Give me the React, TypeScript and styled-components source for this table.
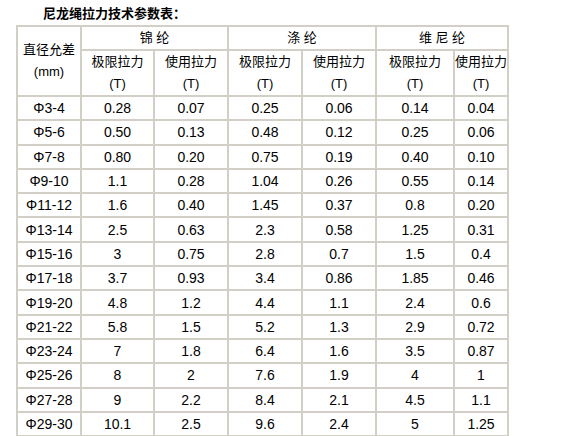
import React from 'react';
import styled, { createGlobalStyle } from 'styled-components';

const GlobalStyle = createGlobalStyle`
  html, body {
    margin: 0;
    padding: 0;
    background: #fff;
  }
  body {
    font-family: "Liberation Sans", "Noto Sans CJK SC", Arial, sans-serif;
    color: #000;
  }
`;

const Page = styled.div`
  padding: 6px 0 0 16px;
  width: 569px;
  height: 436px;
  overflow: hidden;
  box-sizing: border-box;
`;

const Title = styled.div`
  padding-left: 27px;
  height: 19px;
  font-family: "Liberation Sans", "Noto Sans CJK SC", sans-serif;
  font-weight: bold;
  font-size: 13px;
  line-height: 16px;
`;

const Table = styled.table`
  border-collapse: collapse;
  table-layout: fixed;
  width: 491px;
  font-size: 14px;
  line-height: 18px;
`;

const Cell = styled.td<{ $h?: number; $cjk?: boolean }>`
  border: 2px solid #d2cfc6;
  padding: 0;
  text-align: center;
  vertical-align: middle;
  height: ${p => (p.$h ? `${p.$h}px` : 'auto')};
  font-size: ${p => (p.$cjk ? '13px' : '14px')};
  line-height: ${p => (p.$cjk ? '22px' : '18px')};
  white-space: nowrap;
`;

const widths = [64, 73, 74, 74, 74, 78, 54];

const rows: string[][] = [
  ['Φ3-4', '0.28', '0.07', '0.25', '0.06', '0.14', '0.04'],
  ['Φ5-6', '0.50', '0.13', '0.48', '0.12', '0.25', '0.06'],
  ['Φ7-8', '0.80', '0.20', '0.75', '0.19', '0.40', '0.10'],
  ['Φ9-10', '1.1', '0.28', '1.04', '0.26', '0.55', '0.14'],
  ['Φ11-12', '1.6', '0.40', '1.45', '0.37', '0.8', '0.20'],
  ['Φ13-14', '2.5', '0.63', '2.3', '0.58', '1.25', '0.31'],
  ['Φ15-16', '3', '0.75', '2.8', '0.7', '1.5', '0.4'],
  ['Φ17-18', '3.7', '0.93', '3.4', '0.86', '1.85', '0.46'],
  ['Φ19-20', '4.8', '1.2', '4.4', '1.1', '2.4', '0.6'],
  ['Φ21-22', '5.8', '1.5', '5.2', '1.3', '2.9', '0.72'],
  ['Φ23-24', '7', '1.8', '6.4', '1.6', '3.5', '0.87'],
  ['Φ25-26', '8', '2', '7.6', '1.9', '4', '1'],
  ['Φ27-28', '9', '2.2', '8.4', '2.1', '4.5', '1.1'],
  ['Φ29-30', '10.1', '2.5', '9.6', '2.4', '5', '1.25'],
];

const Force = ({ label }: { label: string }) => (
  <Cell $cjk $h={43}>
    {label}
    <br />
    (T)
  </Cell>
);

export default function App() {
  return (
    <>
      <GlobalStyle />
      <Page>
        <Title>尼龙绳拉力技术参数表：</Title>
        <Table>
          <colgroup>
            {widths.map((w, i) => (
              <col key={i} style={{ width: w }} />
            ))}
          </colgroup>
          <tbody>
            <tr>
              <Cell rowSpan={2} $cjk>
                直径允差
                <br />
                (mm)
              </Cell>
              <Cell colSpan={2} $cjk $h={20}>锦 纶</Cell>
              <Cell colSpan={2} $cjk>涤 纶</Cell>
              <Cell colSpan={2} $cjk>维 尼 纶</Cell>
            </tr>
            <tr>
              <Force label="极限拉力" />
              <Force label="使用拉力" />
              <Force label="极限拉力" />
              <Force label="使用拉力" />
              <Force label="极限拉力" />
              <Force label="使用拉力" />
            </tr>
            {rows.map(r => (
              <tr key={r[0]}>
                {r.map((v, i) => (
                  <Cell key={i} $h={22.3}>{v}</Cell>
                ))}
              </tr>
            ))}
          </tbody>
        </Table>
      </Page>
    </>
  );
}
